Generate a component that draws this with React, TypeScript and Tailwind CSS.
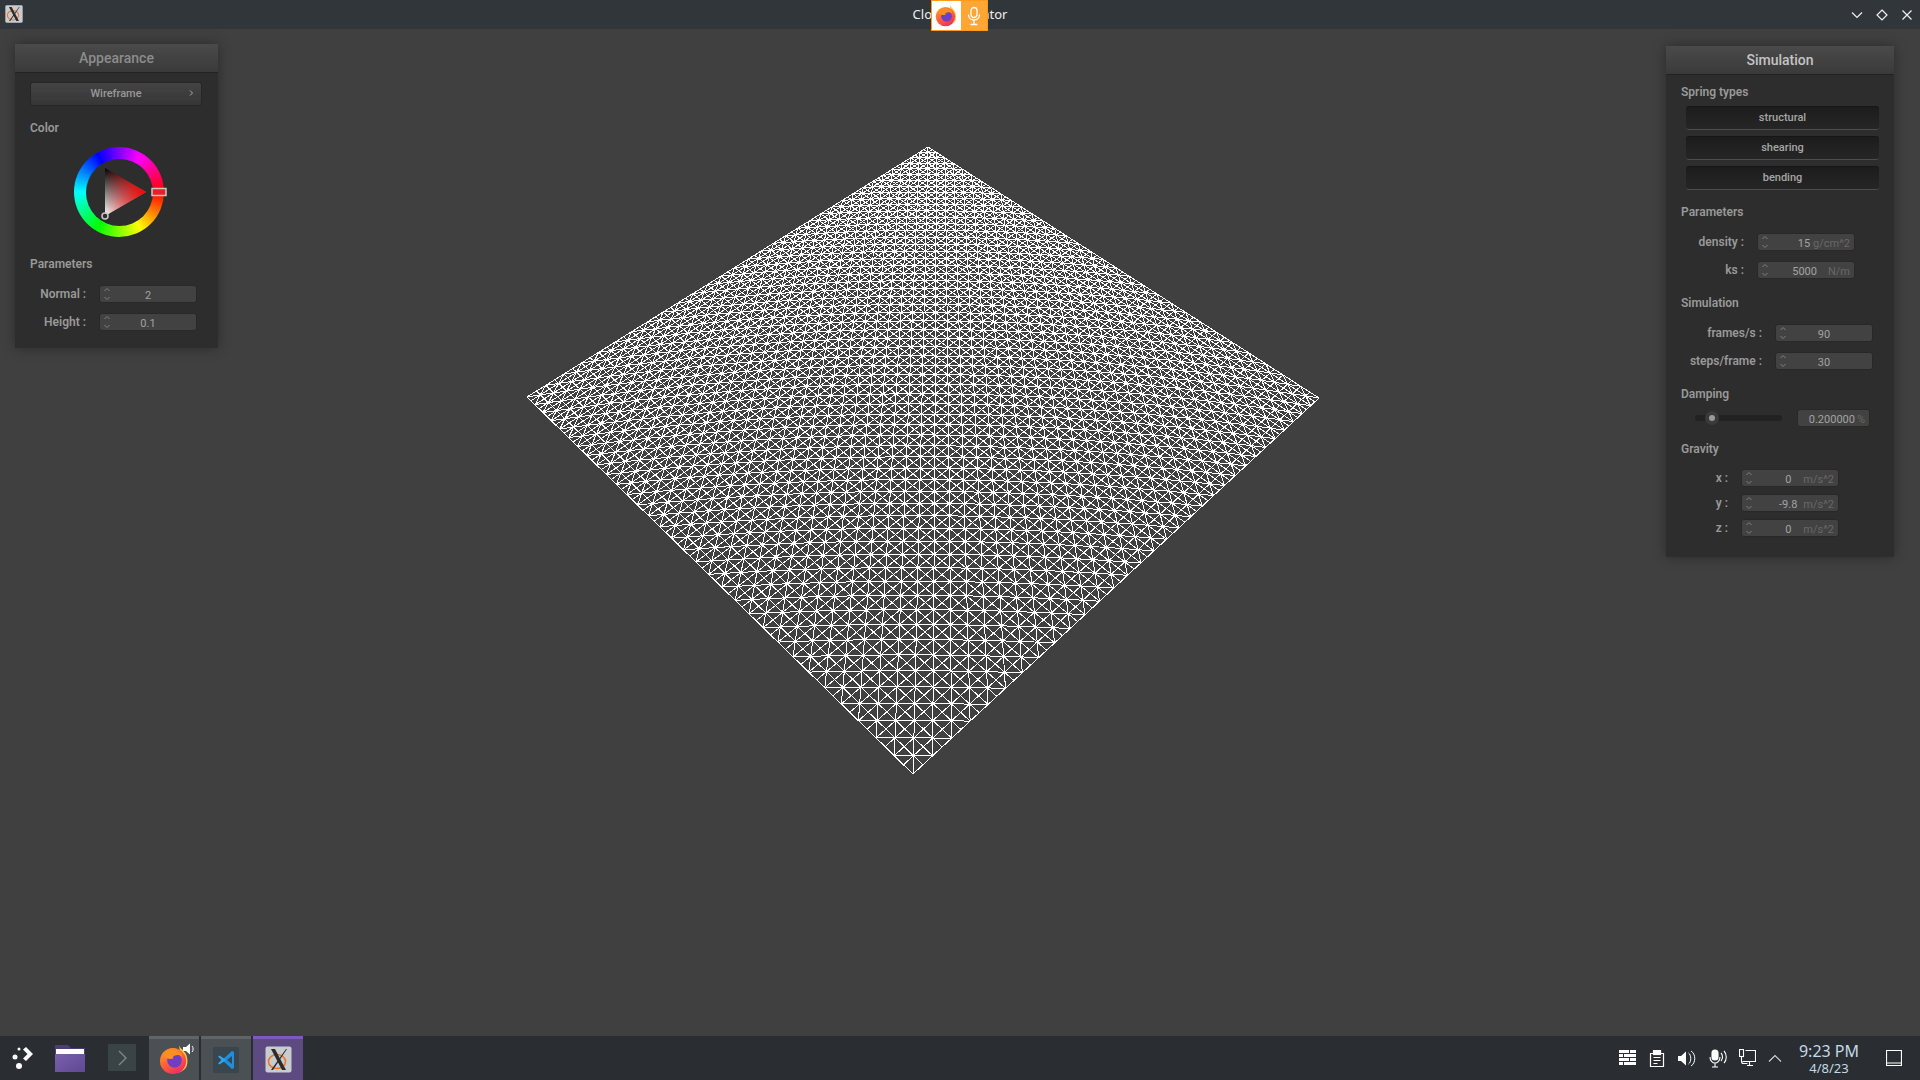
import React from "react";

// homography from the unit square to the cloth's four screen corners
const corners = { a: [913, 774], b: [527, 397], c: [928, 147], d: [1319, 398] };

function makeProjector() {
  const [x0, y0] = corners.a;
  const [x1, y1] = corners.b;
  const [x2, y2] = corners.c;
  const [x3, y3] = corners.d;
  const dx1 = x1 - x2;
  const dx2 = x3 - x2;
  const dy1 = y1 - y2;
  const dy2 = y3 - y2;
  const sx = x0 - x1 + x2 - x3;
  const sy = y0 - y1 + y2 - y3;
  const den = dx1 * dy2 - dx2 * dy1;
  const g = (sx * dy2 - dx2 * sy) / den;
  const h = (dx1 * sy - sx * dy1) / den;
  const a = x1 - x0 + g * x1;
  const b = x3 - x0 + h * x3;
  const d = y1 - y0 + g * y1;
  const e = y3 - y0 + h * y3;
  return (u: number, v: number) => {
    const w = g * u + h * v + 1;
    return [(a * u + b * v + x0) / w, (d * u + e * v + y0) / w];
  };
}

// cells shrink toward the far corner faster than the plain projection gives
const warp = (t: number) => t + 0.22 * t * (1 - t);

function clothPath(n: number) {
  const p = makeProjector();
  const pt = (i: number, j: number) => {
    const [x, y] = p(warp(i / n), warp(j / n));
    return `${x.toFixed(1)} ${y.toFixed(1)}`;
  };
  const parts: string[] = [];
  for (let i = 0; i <= n; i++) {
    let a = `M${pt(i, 0)}`;
    let b = `M${pt(0, i)}`;
    for (let j = 1; j <= n; j++) {
      a += `L${pt(i, j)}`;
      b += `L${pt(j, i)}`;
    }
    parts.push(a, b);
  }
  for (let i = 0; i < n; i++) {
    for (let j = 0; j < n; j++) {
      if ((i + j) % 2 === 0) parts.push(`M${pt(i, j)}L${pt(i + 1, j + 1)}`);
      else parts.push(`M${pt(i + 1, j)}L${pt(i, j + 1)}`);
    }
  }
  return parts.join("");
}

const cloth = clothPath(62);

function Spinner() {
  return (
    <svg width="8" height="14" viewBox="0 0 8 14" fill="none" stroke="#808080" strokeWidth="1" className="shrink-0">
      <path d="M1.5 4 4 1.5 6.5 4M1.5 10 4 12.5 6.5 10" />
    </svg>
  );
}

function NumberBox({ value, unit, gap, center }: { value: string; unit?: string; gap?: string; center?: boolean }) {
  return (
    <div className="w-[98px] h-[18px] rounded-[3px] bg-[#424242] border border-[#282828] flex items-center pl-[3px] pr-[4px] text-[11px] leading-none">
      <Spinner />
      {center ? (
        <span className="flex-1 text-center text-[#a3a3a3] pr-[7px] pt-[2px]">{value}</span>
      ) : (
        <>
          <span className={`flex-1 text-right text-[#a3a3a3] pt-[2px] ${gap ?? ""}`}>{value}</span>
          <span className="text-[#686868] pt-[2px]">{unit}</span>
        </>
      )}
    </div>
  );
}

function Row({ label, labelWidth, className, children }: { label: string; labelWidth: string; className?: string; children: React.ReactNode }) {
  return (
    <div className={`flex items-center gap-[13px] ${className ?? ""}`}>
      <span className={`${labelWidth} whitespace-nowrap text-right text-[12px] font-semibold text-[#999999] leading-none`}>{label}</span>
      {children}
    </div>
  );
}

function Heading({ children, className }: { children: React.ReactNode; className?: string }) {
  return <div className={`text-[12px] leading-[16px] font-semibold text-[#999999] ${className ?? ""}`}>{children}</div>;
}

function SpringButton({ label }: { label: string }) {
  return (
    <div className="w-[193px] h-[24px] ml-[5px] pt-[1px] rounded-[3px] bg-gradient-to-b from-[#1c1c1c] to-[#262626] border-b border-b-[#4d4d4d] border-t border-t-[#161616] flex items-center justify-center text-[11px] font-medium text-[#a6a6a6]">
      {label}
    </div>
  );
}

function ColorWheel() {
  return (
    <div className="relative w-[90px] h-[90px] ml-[44px] mt-[11px] rounded-full bg-[conic-gradient(from_90deg,#ff0000,#ffff00,#00ff00,#00ffff,#0000ff,#ff00ff,#ff0000)] flex items-center justify-center">
      <div className="w-[67px] h-[67px] rounded-full bg-[#2d2d2d]" />
      <svg className="absolute left-[-14px] top-[-1px]" width="120" height="92" viewBox="60 146 120 92">
        <defs>
          <linearGradient id="blackWhite" x1="0" y1="0" x2="0" y2="1">
            <stop offset="0" stopColor="#000000" />
            <stop offset="1" stopColor="#ffffff" />
          </linearGradient>
          <linearGradient id="redFade" gradientUnits="userSpaceOnUse" x1="146" y1="192" x2="105" y2="192">
            <stop offset="0" stopColor="#ff0000" />
            <stop offset="1" stopColor="#ff0000" stopOpacity="0" />
          </linearGradient>
        </defs>
        <path d="M146 192 105 168V216Z" fill="url(#blackWhite)" />
        <path d="M146 192 105 168V216Z" fill="url(#redFade)" />
        <circle cx="105" cy="216" r="3" fill="#2d2d2d" stroke="#c8c8c8" strokeWidth="1.5" />
        <rect x="152" y="188.5" width="14" height="7" fill="#ee1c25" stroke="#c8c8c8" strokeWidth="1.5" />
      </svg>
    </div>
  );
}

function FirefoxIcon({ size }: { size: number }) {
  return (
    <svg width={size} height={size} viewBox="0 0 32 32">
      <defs>
        <linearGradient id={`ff${size}`} x1="0.2" y1="0" x2="0.8" y2="1">
          <stop offset="0" stopColor="#ff9a25" />
          <stop offset="0.55" stopColor="#ff5a3c" />
          <stop offset="1" stopColor="#e8246f" />
        </linearGradient>
      </defs>
      <path d="M21 1c0 3 3 4 6 8 3 5 3 11 1 15-2 3-6 6-11 6L24 14c0-5-4-8-3-13Z" fill="#ffc93a" />
      <circle cx="14.500" cy="17.500" r="13.500" fill={`url(#ff${size})`} />
      <circle cx="16" cy="17" r="7.500" fill="#6c3fc4" />
      <path d="M4 12c3-5 10-7 15-5 3 1 5 3 5 6-3-2-5-2-8-1-2 1-2 2-1 3-4 1-8 0-11-3Z" fill="#ff8f1f" />
    </svg>
  );
}

function XLogo({ size }: { size: number }) {
  return (
    <svg width={size} height={size} viewBox="0 0 27 27">
      <rect x="0.5" y="0.5" width="26" height="26" rx="2" fill="#c9ccce" />
      <ellipse cx="12" cy="15.5" rx="8.5" ry="7" fill="none" stroke="#e8772e" strokeWidth="1.6" />
      <path d="M6 3h4l11 21h-4Z" fill="#2b2b2b" />
      <path d="M21 3 6 24h2L22 3Z" fill="#2b2b2b" />
    </svg>
  );
}

function MicIcon({ color = "#ffffff" }: { color?: string }) {
  return (
    <svg width="16" height="20" viewBox="0 0 16 20" fill="none" stroke={color} strokeWidth="1.3">
      <rect x="5" y="1.5" width="6" height="10" rx="3" />
      <path d="M2.5 8.5c0 3.5 2.5 5.5 5.5 5.5s5.5-2 5.5-5.5M8 14v4M4.5 18.5h7" />
    </svg>
  );
}

function Launcher() {
  return (
    <svg width="26" height="26" viewBox="0 0 26 26" fill="#ffffff">
      <path d="M14 4.5 17 2l7 7-7 7-3-2.5 4.500-4.500Z" />
      <circle cx="6" cy="12" r="2.500" />
      <circle cx="10" cy="4" r="1.500" />
      <circle cx="10" cy="21" r="3" />
    </svg>
  );
}

function Folder() {
  return (
    <svg width="30" height="28" viewBox="0 0 30 28">
      <defs>
        <linearGradient id="folderBody" x1="0" y1="0" x2="1" y2="1">
          <stop offset="0" stopColor="#7a5fae" />
          <stop offset="1" stopColor="#5f4a92" />
        </linearGradient>
      </defs>
      <path d="M0 1h13l3 3h14v24H0Z" fill="#4f3b78" />
      <rect x="1" y="5" width="28" height="5" fill="#ffffff" />
      <path d="M0 10h30v18H0Z" fill="url(#folderBody)" />
    </svg>
  );
}

function Terminal() {
  return (
    <svg width="28" height="28" viewBox="0 0 28 28">
      <rect width="28" height="27" rx="1" fill="#3a4345" />
      <path d="M11 7l7 7-7 7" fill="none" stroke="#7d8689" strokeWidth="1.4" />
    </svg>
  );
}

function VsCode() {
  return (
    <svg width="26" height="26" viewBox="0 0 26 26">
      <rect width="26" height="26" rx="1" fill="#39464d" />
      <path d="M19 4 9 13l10 9 2-1V5ZM19 9l-5 4 5 4Z" fill="#1c8fe0" fillRule="evenodd" />
      <path d="M5 9.500 6.500 8.500 13 13l-6.500 4.500L5 16.500 8.500 13Z" fill="#2fa6ef" />
    </svg>
  );
}

function TrayIcons() {
  return (
    <div className="flex items-center gap-[12px] text-white">
      <svg width="17" height="16" viewBox="0 0 17 16" fill="#ffffff">
        <path d="M0 0h10v3H0ZM11 0h6v3h-6ZM0 4h4v3H0ZM5 4h12v3H5ZM0 8h10v3H0ZM11 8h6v3h-6ZM0 12h4v3H0ZM5 12h12v3H5Z" />
      </svg>
      <svg width="16" height="17" viewBox="0 0 16 17" fill="none" stroke="#ffffff" strokeWidth="1.2" className="ml-[1px]">
        <path d="M1.500 3.500h13v13h-13ZM4.500 7.500h7M4.500 10.500h7M4.500 13.500h4" />
        <rect x="4.500" y="0.500" width="7" height="4" fill="#ffffff" />
      </svg>
      <svg width="18" height="17" viewBox="0 0 18 17" fill="#ffffff" className="ml-[1px]">
        <path d="M0 6h3l5-4.500v14L3 11H0Z" />
        <path d="M10.500 3c3 2 3 9 0 11M13 1c5 3 5 12 0 15" fill="none" stroke="#ffffff" strokeWidth="1" />
      </svg>
      <svg width="18" height="19" viewBox="0 0 18 19" fill="none" stroke="#ffffff" strokeWidth="1.100" className="ml-[1px]">
        <rect x="3" y="1" width="6" height="10" rx="3" fill="#ffffff" />
        <path d="M1 8c0 3.500 2.500 6 5 6s5-2.500 5-6M6 14v3.500M3 18h6M12 4c2 2 2 6 0 8M15 2c3 3 3 9 0 12" />
      </svg>
      <svg width="17" height="18" viewBox="0 0 17 18" fill="none" stroke="#ffffff" strokeWidth="1.100">
        <rect x="0.500" y="0.500" width="4" height="7" />
        <path d="M6.500 1.500h10v11h-13M2.500 8v4.500c0 1.500 1 2 2 2h4M8 16.500h6M10.500 13v3" />
      </svg>
      <svg width="14" height="8" viewBox="0 0 14 8" fill="none" stroke="#d8d8d8" strokeWidth="1.100">
        <path d="M1 7.500 7 1.500 13 7.500" />
      </svg>
    </div>
  );
}

export default function App() {
  return (
    <div className="relative w-[1920px] h-[1080px] overflow-hidden flex flex-col bg-[#404040] font-['Roboto',sans-serif]">
      {/* title bar */}
      <div className="relative h-[29px] shrink-0 bg-[#31363b] flex items-center justify-center">
        <span className="absolute left-[5px] top-[5px]"><XLogo size={18} /></span>
        <span className="font-['Noto_Sans',sans-serif] text-[13px] text-[#eff0f1]">Cloth Simulator</span>
        <div className="absolute left-[931px] top-0 w-[57px] h-[31px] flex border border-[#ff9a1f] z-10">
          <div className="w-[29px] bg-white flex items-center justify-center"><FirefoxIcon size={23} /></div>
          <div className="flex-1 bg-[#ffa634] flex items-center justify-center"><MicIcon /></div>
        </div>
        <div className="absolute right-[6px] top-0 h-full flex items-center gap-[11px]">
          <svg width="14" height="14" viewBox="0 0 14 14" fill="none" stroke="#eff0f1" strokeWidth="1.200"><path d="M2 4.500 7 9.500 12 4.500" /></svg>
          <svg width="14" height="14" viewBox="0 0 14 14" fill="none" stroke="#eff0f1" strokeWidth="1.200"><path d="M7 2 12 7 7 12 2 7Z" /></svg>
          <svg width="14" height="14" viewBox="0 0 14 14" fill="none" stroke="#eff0f1" strokeWidth="1.200"><path d="M2.500 2.500 11.500 11.500M11.500 2.500 2.500 11.500" /></svg>
        </div>
      </div>

      {/* viewport */}
      <div className="flex-1 flex justify-between items-start pl-[15px] pr-[26px] pt-[15px]">
        <svg className="absolute left-0 top-0" width="1920" height="1080" shapeRendering="crispEdges">
          <path d={cloth} fill="none" stroke="#ffffff" strokeWidth="1" />
        </svg>

        {/* appearance panel */}
        <div className="relative w-[203px] h-[304px] bg-[#2d2d2d] shadow-[0_0_12px_rgba(0,0,0,0.35)]">
          <div className="h-[29px] bg-gradient-to-b from-[#4a4a4a] to-[#3a3a3a] border-b border-b-[#222222] flex items-center justify-center text-[14px] font-medium text-[#8c8c8c]">
            Appearance
          </div>
          <div className="px-[15px]">
            <div className="relative mt-[9px] w-[172px] h-[24px] pt-[1px] rounded-[3px] bg-gradient-to-b from-[#444444] to-[#363636] border border-[#262626] flex items-center justify-center text-[11px] font-medium text-[#999999]">
              Wireframe
              <svg className="absolute right-[7px] top-[6px]" width="6" height="8" viewBox="0 0 6 8" fill="none" stroke="#aaaaaa" strokeWidth="1"><path d="M2 1.500 4.500 4 2 6.500" /></svg>
            </div>
            <Heading className="mt-[14px]">Color</Heading>
            <ColorWheel />
            <Heading className="mt-[19px]">Parameters</Heading>
            <Row label="Normal :" labelWidth="w-[56px]" className="mt-[13px]"><NumberBox value="2" center /></Row>
            <Row label="Height :" labelWidth="w-[56px]" className="mt-[10px]"><NumberBox value="0.1" center /></Row>
          </div>
        </div>

        {/* simulation panel */}
        <div className="relative mt-[2px] w-[228px] h-[511px] bg-[#2d2d2d] shadow-[0_0_12px_rgba(0,0,0,0.35)]">
          <div className="h-[29px] bg-gradient-to-b from-[#4a4a4a] to-[#3a3a3a] border-b border-b-[#222222] flex items-center justify-center text-[14px] font-medium text-[#c4c4c4]">
            Simulation
          </div>
          <div className="px-[15px]">
            <Heading className="mt-[9px]">Spring types</Heading>
            <div className="mt-[6px] flex flex-col gap-[6px]">
              <SpringButton label="structural" />
              <SpringButton label="shearing" />
              <SpringButton label="bending" />
            </div>
            <Heading className="mt-[14px]">Parameters</Heading>
            <Row label="density :" labelWidth="w-[63px]" className="mt-[13px]"><NumberBox value="15" unit="g/cm^2" gap="pr-[3px]" /></Row>
            <Row label="ks :" labelWidth="w-[63px]" className="mt-[10px]"><NumberBox value="5000" unit="N/m" gap="pr-[11px]" /></Row>
            <Heading className="mt-[16px]">Simulation</Heading>
            <Row label="frames/s :" labelWidth="w-[81px]" className="mt-[13px]"><NumberBox value="90" center /></Row>
            <Row label="steps/frame :" labelWidth="w-[81px]" className="mt-[10px]"><NumberBox value="30" center /></Row>
            <Heading className="mt-[16px]">Damping</Heading>
            <div className="mt-[7px] flex items-center">
              <div className="relative ml-[14px] w-[87px] h-[6px] rounded-[3px] bg-[#222222]">
                <div className="absolute left-[10px] top-[-4px] w-[14px] h-[14px] rounded-full bg-[#3a3a3a] flex items-center justify-center">
                  <div className="w-[6px] h-[6px] rounded-full bg-[#9a9a9a]" />
                </div>
              </div>
              <div className="ml-[15px] w-[73px] h-[18px] pt-[2px] rounded-[3px] bg-[#424242] border border-[#282828] flex items-center justify-end pr-[4px] text-[11px] leading-none text-[#a3a3a3]">
                0.200000<span className="ml-[2px] text-[#686868]">%</span>
              </div>
            </div>
            <Heading className="mt-[14px]">Gravity</Heading>
            <Row label="x :" labelWidth="w-[47px]" className="mt-[12px]"><NumberBox value="0" unit="m/s^2" gap="pr-[12px]" /></Row>
            <Row label="y :" labelWidth="w-[47px]" className="mt-[7px]"><NumberBox value="-9.8" unit="m/s^2" gap="pr-[6px]" /></Row>
            <Row label="z :" labelWidth="w-[47px]" className="mt-[7px]"><NumberBox value="0" unit="m/s^2" gap="pr-[12px]" /></Row>
          </div>
        </div>
      </div>

      {/* taskbar */}
      <div className="relative h-[44px] shrink-0 bg-[#2a2e32] flex items-center">
        <div className="w-[44px] flex justify-center"><Launcher /></div>
        <div className="ml-[11px] w-[30px] flex"><Folder /></div>
        <div className="ml-[23px] w-[28px] flex"><Terminal /></div>
        <div className="ml-[13px] w-[50px] h-full bg-[#4b5055] border-t-[3px] border-t-[#5f6468] flex items-center justify-center relative">
          <FirefoxIcon size={31} />
          <svg className="absolute right-[3px] top-[3px]" width="14" height="14" viewBox="0 0 14 14" fill="#ffffff"><path d="M1 5h3l4-3.500v11L4 9H1Z" /><path d="M10 4c1.500 1.500 1.500 4.500 0 6" fill="none" stroke="#ffffff" /></svg>
        </div>
        <div className="ml-[2px] w-[50px] h-full bg-[#4b5055] border-t-[3px] border-t-[#5f6468] flex items-center justify-center"><VsCode /></div>
        <div className="ml-[2px] w-[50px] h-full bg-[#5c4a80] border-t-[3px] border-t-[#7e57c2] flex items-center justify-center"><XLogo size={27} /></div>
        <div className="ml-auto flex items-center">
          <TrayIcons />
          <div className="ml-[15px] w-[64px] flex flex-col items-center font-['Noto_Sans',sans-serif] text-[#c3d9e8] leading-none">
            <span className="text-[16px] leading-[19px]">9:23 PM</span>
            <span className="text-[13px] leading-[14px]">4/8/23</span>
          </div>
          <svg className="ml-[25px] mr-[18px]" width="16" height="16" viewBox="0 0 16 16" fill="none" stroke="#ffffff" strokeWidth="1.200"><path d="M0.500 0.500h15v15h-15ZM0.500 13h15" /></svg>
        </div>
      </div>
    </div>
  );
}
